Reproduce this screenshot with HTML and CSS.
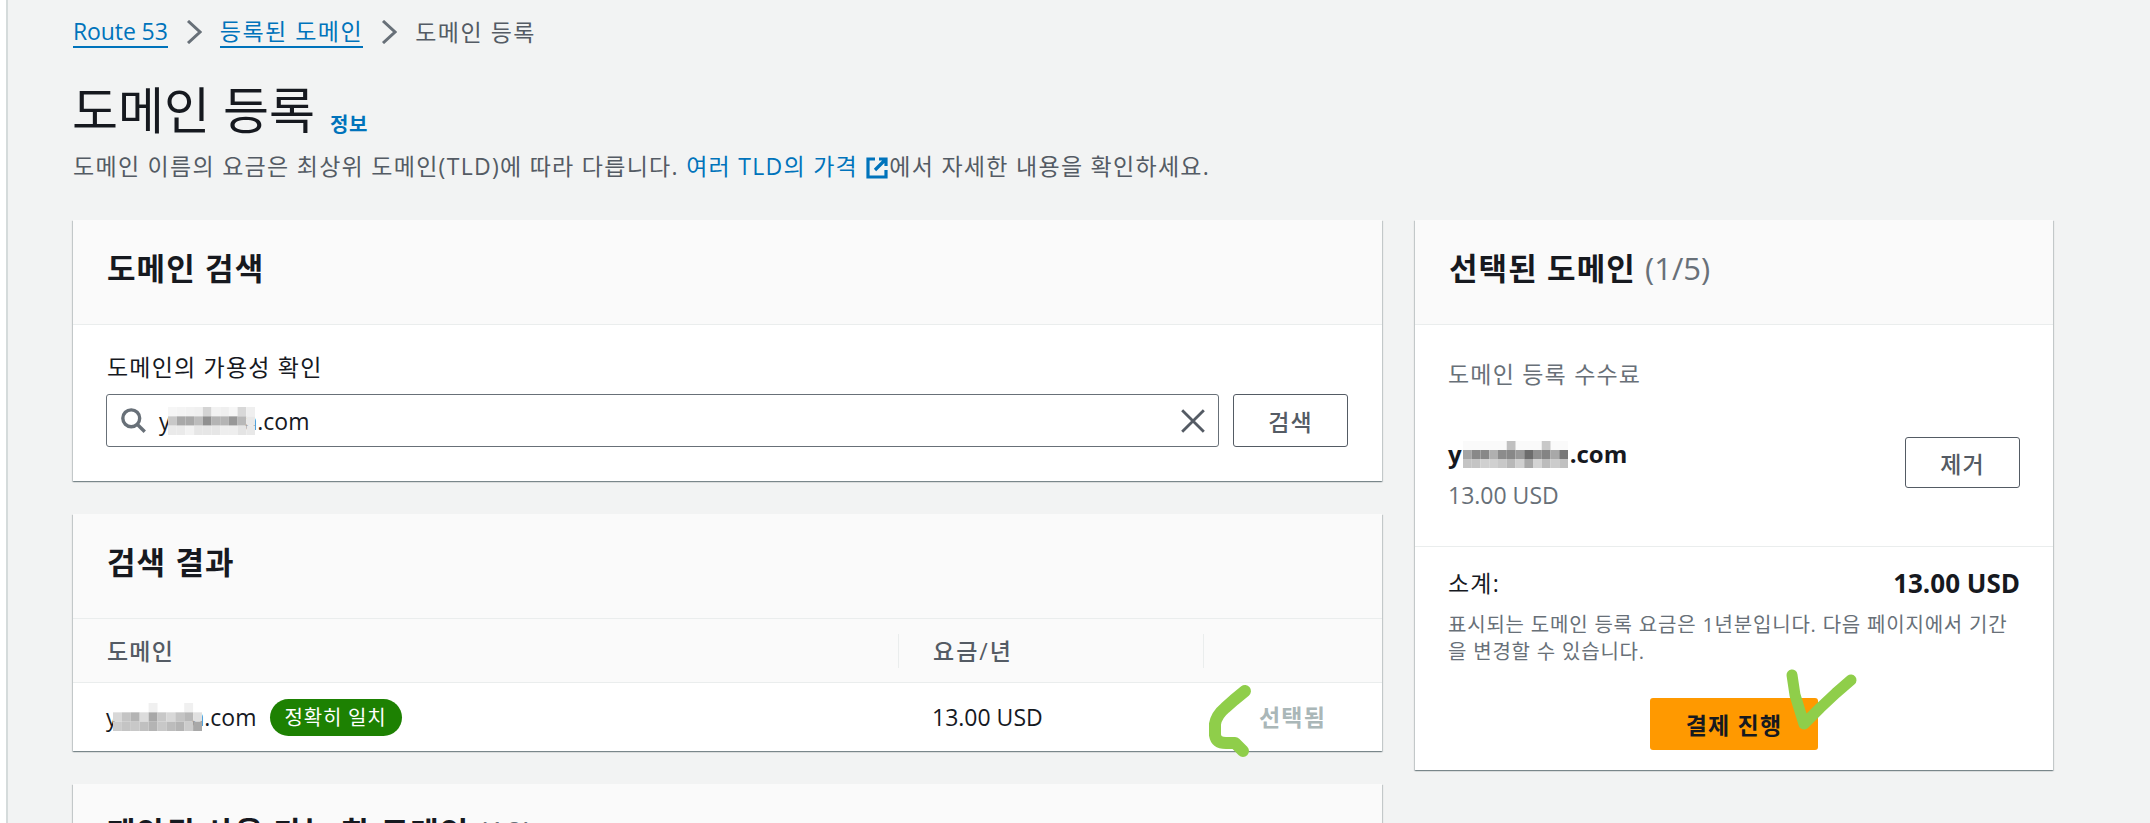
FILE: index.html
```html
<!DOCTYPE html>
<html lang="ko">
	<head>
		<meta charset="utf-8">
		<title>도메인 등록</title>
		<link rel="stylesheet" href="styles.css">
	</head>
	<body>
		<div class="page">
			<nav class="crumbs">
				<a class="latin" href="#">Route 53</a>
				<svg class="crumb-sep" viewBox="0 0 16 24"><path d="M2 1l12 11L2 23"/></svg>
				<a href="#">등록된 도메인</a>
				<svg class="crumb-sep" viewBox="0 0 16 24"><path d="M2 1l12 11L2 23"/></svg>
				<span>도메인 등록</span>
			</nav>
			<header class="page-head">
				<h1>도메인 등록</h1>
				<a class="info" href="#">정보</a>
			</header>
			<p class="lead">도메인 이름의 요금은 최상위 도메인(TLD)에 따라 다릅니다. <a href="#">여러 TLD의 가격 <svg class="ext" viewBox="0 0 24 24"><path d="M10 3H3v18h18v-7"/><path d="M14 3h7v7M21 3L10 14"/></svg></a>에서 자세한 내용을 확인하세요.</p>

			<div class="columns">
				<main class="left">
					<section class="card card-search">
						<div class="card-head"><h2>도메인 검색</h2></div>
						<div class="search-body">
							<label class="field-label">도메인의 가용성 확인</label>
							<div class="search-row">
								<div class="input">
									<svg class="icon-search" viewBox="0 0 24 24"><circle cx="10" cy="10" r="7.5"/><path d="M15.5 15.5L22 22"/></svg>
									<span class="domain">y<svg class="mosaic" width="87" height="28" viewBox="0 0 10 3" preserveAspectRatio="none">
										<rect x="0" y="0" width="1" height="1" fill="#f6f6f6"/><rect x="1" y="0" width="1" height="1" fill="#f4f4f4"/><rect x="2" y="0" width="1" height="1" fill="#f2f2f2"/><rect x="3" y="0" width="1" height="1" fill="#f0f0f0"/><rect x="4" y="0" width="1" height="1" fill="#d4d4d4"/><rect x="5" y="0" width="1" height="1" fill="#f2f2f2"/><rect x="6" y="0" width="1" height="1" fill="#efefef"/><rect x="7" y="0" width="1" height="1" fill="#f6f6f6"/><rect x="8" y="0" width="1" height="1" fill="#d8d8d8"/><rect x="9" y="0" width="1" height="1" fill="#efefef"/>
										<rect x="0" y="1" width="1" height="1" fill="#c8c8c8"/><rect x="1" y="1" width="1" height="1" fill="#a8a8a8"/><rect x="2" y="1" width="1" height="1" fill="#a8a8a8"/><rect x="3" y="1" width="1" height="1" fill="#bcbcbc"/><rect x="4" y="1" width="1" height="1" fill="#909090"/><rect x="5" y="1" width="1" height="1" fill="#b4b4b4"/><rect x="6" y="1" width="1" height="1" fill="#b4b4b4"/><rect x="7" y="1" width="1" height="1" fill="#989898"/><rect x="8" y="1" width="1" height="1" fill="#b8b8b8"/><rect x="9" y="1" width="1" height="1" fill="#e8e8e8"/>
										<rect x="0" y="2" width="1" height="1" fill="#eaeaea"/><rect x="1" y="2" width="1" height="1" fill="#eaeaea"/><rect x="2" y="2" width="1" height="1" fill="#f2f2f2"/><rect x="3" y="2" width="1" height="1" fill="#e6e6e6"/><rect x="4" y="2" width="1" height="1" fill="#e6e6e6"/><rect x="5" y="2" width="1" height="1" fill="#e6e6e6"/><rect x="6" y="2" width="1" height="1" fill="#eeeeee"/><rect x="7" y="2" width="1" height="1" fill="#eeeeee"/><rect x="8" y="2" width="1" height="1" fill="#e4e4e4"/><rect x="9" y="2" width="1" height="1" fill="#e8e8e8"/>
									</svg>a.com</span>
									<svg class="icon-clear" viewBox="0 0 24 24"><path d="M2 2l20 20M22 2L2 22"/></svg>
								</div>
								<button class="btn">검색</button>
							</div>
						</div>
					</section>

					<section class="card card-results">
						<div class="card-head"><h2>검색 결과</h2></div>
						<div class="table-head">
							<div class="cell cell-domain">도메인</div>
							<div class="cell cell-price">요금/년</div>
							<div class="cell cell-action"></div>
						</div>
						<div class="table-row">
							<div class="cell-domain domain-line">
								<span class="domain">y<svg class="mosaic" width="89" height="28" viewBox="0 0 10 3" preserveAspectRatio="none">
									<rect x="0" y="0" width="10" height="1" fill="#fff"/><rect x="4" y="0" width="1" height="1" fill="#f0f0f0"/><rect x="8" y="0" width="1" height="1" fill="#f0f0f0"/>
									<rect x="0" y="1" width="1" height="1" fill="#d8d8d8"/><rect x="1" y="1" width="1" height="1" fill="#c4c4c4"/><rect x="2" y="1" width="1" height="1" fill="#b4b4b4"/><rect x="3" y="1" width="1" height="1" fill="#dcdcdc"/><rect x="4" y="1" width="1" height="1" fill="#a8a8a8"/><rect x="5" y="1" width="1" height="1" fill="#c8c8c8"/><rect x="6" y="1" width="1" height="1" fill="#d8d8d8"/><rect x="7" y="1" width="1" height="1" fill="#c4c4c4"/><rect x="8" y="1" width="1" height="1" fill="#b8b8b8"/><rect x="9" y="1" width="1" height="1" fill="#e0e0e0"/>
									<rect x="0" y="2" width="1" height="1" fill="#cccccc"/><rect x="1" y="2" width="1" height="1" fill="#c4c4c4"/><rect x="2" y="2" width="1" height="1" fill="#c8c8c8"/><rect x="3" y="2" width="1" height="1" fill="#c0c0c0"/><rect x="4" y="2" width="1" height="1" fill="#b4b4b4"/><rect x="5" y="2" width="1" height="1" fill="#c8c8c8"/><rect x="6" y="2" width="1" height="1" fill="#bcbcbc"/><rect x="7" y="2" width="1" height="1" fill="#b4b4b4"/><rect x="8" y="2" width="1" height="1" fill="#cccccc"/><rect x="9" y="2" width="1" height="1" fill="#a8a8a8"/>
								</svg>a.com</span>
								<span class="badge">정확히 일치</span>
							</div>
							<div class="cell-price latin">13.00 USD</div>
							<div class="cell-action selected">선택됨</div>
						</div>
					</section>

					<section class="card card-more">
						<div class="card-head"><h2>제안된 사용 가능 한 도메인 <span class="count">(10)</span></h2></div>
					</section>
				</main>

				<aside class="card cart">
					<div class="card-head"><h2>선택된 도메인 <span class="count">(1/5)</span></h2></div>
					<div class="cart-items">
						<div class="muted-label">도메인 등록 수수료</div>
						<div class="cart-item">
							<div>
								<div class="domain cart-domain">y<svg class="mosaic mosaic-cart" width="105" height="27" viewBox="0 0 12 3" preserveAspectRatio="none">
									<rect x="0" y="0" width="12" height="1" fill="#fafafa"/><rect x="5" y="0" width="1" height="1" fill="#c0c0c0"/><rect x="9" y="0" width="1" height="1" fill="#c8c8c8"/>
									<rect x="0" y="1" width="1" height="1" fill="#a4a4a4"/><rect x="1" y="1" width="1" height="1" fill="#888888"/><rect x="2" y="1" width="1" height="1" fill="#888888"/><rect x="3" y="1" width="1" height="1" fill="#b0b0b0"/><rect x="4" y="1" width="1" height="1" fill="#8c8c8c"/><rect x="5" y="1" width="1" height="1" fill="#888888"/><rect x="6" y="1" width="1" height="1" fill="#989898"/><rect x="7" y="1" width="1" height="1" fill="#6c6c6c"/><rect x="8" y="1" width="1" height="1" fill="#909090"/><rect x="9" y="1" width="1" height="1" fill="#848484"/><rect x="10" y="1" width="1" height="1" fill="#a8a8a8"/><rect x="11" y="1" width="1" height="1" fill="#787878"/>
									<rect x="0" y="2" width="1" height="1" fill="#c4c4c4"/><rect x="1" y="2" width="1" height="1" fill="#c4c4c4"/><rect x="2" y="2" width="1" height="1" fill="#d0d0d0"/><rect x="3" y="2" width="1" height="1" fill="#d0d0d0"/><rect x="4" y="2" width="1" height="1" fill="#c8c8c8"/><rect x="5" y="2" width="1" height="1" fill="#b8b8b8"/><rect x="6" y="2" width="1" height="1" fill="#d0d0d0"/><rect x="7" y="2" width="1" height="1" fill="#a8a8a8"/><rect x="8" y="2" width="1" height="1" fill="#d4d4d4"/><rect x="9" y="2" width="1" height="1" fill="#bcbcbc"/><rect x="10" y="2" width="1" height="1" fill="#cccccc"/><rect x="11" y="2" width="1" height="1" fill="#c0c0c0"/>
								</svg>.com</div>
								<div class="muted-price latin">13.00 USD</div>
							</div>
							<button class="btn btn-remove">제거</button>
						</div>
					</div>
					<div class="cart-total">
						<div class="total-line"><span>소계:</span><strong class="latin">13.00 USD</strong></div>
						<p class="note">표시되는 도메인 등록 요금은 1년분입니다. 다음 페이지에서 기간을 변경할 수 있습니다.</p>
						<div class="checkout"><button class="btn-primary">결제 진행</button></div>
					</div>
				</aside>
			</div>
		</div>

		<!-- hand drawn marks on top of the screenshot -->
		<svg class="scribble" width="2150" height="823" viewBox="0 0 2150 823">
			<path d="M1245 691L1234 700L1225 708C1219 713 1216 718 1215 724L1215 735C1216 741 1220 743 1226 743L1235 743L1243 751"/>
			<path class="tick" d="M1792 675L1795 695L1804 724L1820 708L1836 693L1851 680"/>
		</svg>
	</body>
</html>
```

FILE: styles.css
```css
* {
	box-sizing: border-box;
}
html,
body {
	margin: 0;
	height: 823px;
	overflow: hidden;
	background: #fff;
}
body {
	color: #16191f;
	font-family: "Open Sans", "Noto Sans CJK KR", sans-serif;
	font-size: 23px;
	letter-spacing: 1.2px;
	line-height: 28px;
	padding-left: 6px;
}
a {
	color: #0073bb;
	text-decoration: none;
}
button {
	font-family: inherit;
	letter-spacing: inherit;
}
.latin {
	letter-spacing: 0;
}
.page {
	height: 823px;
	overflow: hidden;
	background: #f2f3f3;
	border-left: 2px solid #d5dbdb;
	padding: 16px 95px 0 65px;
}

/* breadcrumbs */
.crumbs {
	display: flex;
	align-items: center;
	gap: 18px;
	height: 32px;
	color: #545b64;
	letter-spacing: 1.5px;
}
.crumbs a {
	border-bottom: 2px solid #0073bb;
	line-height: 29px;
}
.crumbs .latin {
	letter-spacing: -0.1px;
}
.crumb-sep {
	width: 16px;
	height: 24px;
	fill: none;
	stroke: #687078;
	stroke-width: 3;
}

/* page title */
.page-head {
	display: flex;
	align-items: flex-end;
	gap: 15px;
	margin-top: 33px;
	height: 58px;
}
h1 {
	font-size: 50px;
	font-weight: 400;
	letter-spacing: 0;
	line-height: 58px;
	margin: 0 0 0 -1px;
}
.info {
	font-size: 20px;
	font-weight: 700;
	letter-spacing: 0.5px;
	line-height: 28px;
}
.lead {
	color: #545b64;
	margin: 13px 0 0;
	height: 28px;
	letter-spacing: 1.28px;
	white-space: nowrap;
}
.ext {
	width: 24px;
	height: 24px;
	vertical-align: -5px;
	fill: none;
	stroke: #0073bb;
	stroke-width: 3.2;
}

/* columns */
.columns {
	display: grid;
	grid-template-columns: 1309px 638px;
	gap: 33px;
	margin-top: 40px;
	align-items: start;
}
.left {
	display: flex;
	flex-direction: column;
	gap: 33px;
}
.card {
	background: #fff;
	box-shadow: 0 1px 1px 0 rgba(0, 28, 36, 0.3), 1px 1px 1px 0 rgba(0, 28, 36, 0.15), -1px 1px 1px 0 rgba(0, 28, 36, 0.15);
}
.card-head {
	height: 105px;
	background: #fafafa;
	border-bottom: 1px solid #eaeded;
	padding: 0 34px 9px;
	display: flex;
	align-items: center;
}
h2 {
	font-size: 31px;
	font-weight: 700;
	letter-spacing: 1.1px;
	line-height: 36px;
	margin: 0;
}
.count {
	color: #687078;
	font-weight: 400;
	letter-spacing: 0;
}

/* search card */
.search-body {
	padding: 26px 34px 33px;
}
.card-search {
	height: 261px;
}
.field-label {
	display: block;
	line-height: 32px;
	margin-bottom: 11px;
}
.search-row {
	display: flex;
	gap: 14px;
	margin-left: -1px;
}
.input {
	flex: 1;
	height: 53px;
	border: 1px solid #687078;
	border-radius: 3px;
	display: flex;
	align-items: center;
	padding: 0 12px 0 13px;
	gap: 12px;
}
.icon-search {
	width: 27px;
	height: 27px;
	fill: none;
	stroke: #687078;
	stroke-width: 3;
}
.icon-clear {
	width: 26px;
	height: 26px;
	margin-left: auto;
	fill: none;
	stroke: #545b64;
	stroke-width: 2.6;
}
.domain {
	display: inline-flex;
	align-items: center;
	letter-spacing: 0;
}
.mosaic {
	position: relative;
	margin: 0 -10px 0 -3px;
}
.mosaic-cart {
	margin: 0 2px 0 1px;
}
.btn {
	width: 115px;
	height: 53px;
	background: #fff;
	border: 1px solid #545b64;
	border-radius: 3px;
	color: #545b64;
	font-size: 23px;
	font-weight: 500;
}

/* results table */
.card-results {
	height: 237px;
}
.table-head,
.table-row {
	display: grid;
	grid-template-columns: 791px 305px 1fr;
	align-items: center;
	padding-left: 34px;
}
.table-head {
	height: 64px;
	background: #fafafa;
	border-bottom: 1px solid #eaeded;
	color: #545b64;
	font-weight: 500;
}
.table-head .cell {
	height: 34px;
	line-height: 34px;
}
.table-head .cell-price {
	letter-spacing: 2px;
}
.table-head .cell-action,
.table-head .cell-price {
	border-left: 1px solid #eaeded;
	padding-left: 34px;
}
.table-row {
	height: 68px;
}
.table-row .cell-price {
	padding-left: 34px;
}
.domain-line {
	display: flex;
	align-items: center;
	gap: 13px;
}
.domain-line .domain {
	margin-left: -1px;
}
.domain-line .mosaic {
	margin-left: -5px;
}
.badge {
	background: #1d8102;
	color: #fff;
	border-radius: 19px;
	font-size: 20px;
	letter-spacing: 0.8px;
	line-height: 37px;
	padding: 0 15px;
}
.selected {
	color: #aab7b8;
	font-weight: 700;
	padding-left: 56px;
}
.card-more {
	height: 120px;
}

/* right column */
.cart {
	height: 550px;
}
.cart-items {
	padding: 35px 33px 0;
	height: 222px;
	border-bottom: 1px solid #eaeded;
}
.muted-label,
.muted-price {
	color: #687078;
}
.cart-item {
	display: flex;
	justify-content: space-between;
	align-items: flex-start;
	margin-top: 52px;
}
.cart-domain {
	font-weight: 700;
	font-size: 24px;
	display: flex;
}
.muted-price {
	margin-top: 13px;
}
.btn-remove {
	height: 51px;
	margin-top: -3px;
}
.cart-total {
	padding: 22px 33px 0;
}
.total-line {
	display: flex;
	justify-content: space-between;
	align-items: center;
}
.total-line strong {
	font-size: 26px;
}
.note {
	color: #687078;
	font-size: 20px;
	letter-spacing: 0.8px;
	line-height: 27px;
	margin: 14px 0 0;
	word-break: break-all;
}
.checkout {
	display: flex;
	justify-content: center;
	margin-top: 33px;
}
.btn-primary {
	width: 168px;
	height: 52px;
	background: #ff9900;
	border: 0;
	border-radius: 3px;
	color: #16191f;
	font-size: 23px;
	font-weight: 700;
}

/* green pen marks */
.scribble {
	position: absolute;
	left: 0;
	top: 0;
	pointer-events: none;
}
.scribble path {
	fill: none;
	stroke: #8fce4a;
	stroke-width: 12;
	stroke-linecap: round;
	stroke-linejoin: round;
}
.scribble .tick {
	stroke-width: 11;
}
```
